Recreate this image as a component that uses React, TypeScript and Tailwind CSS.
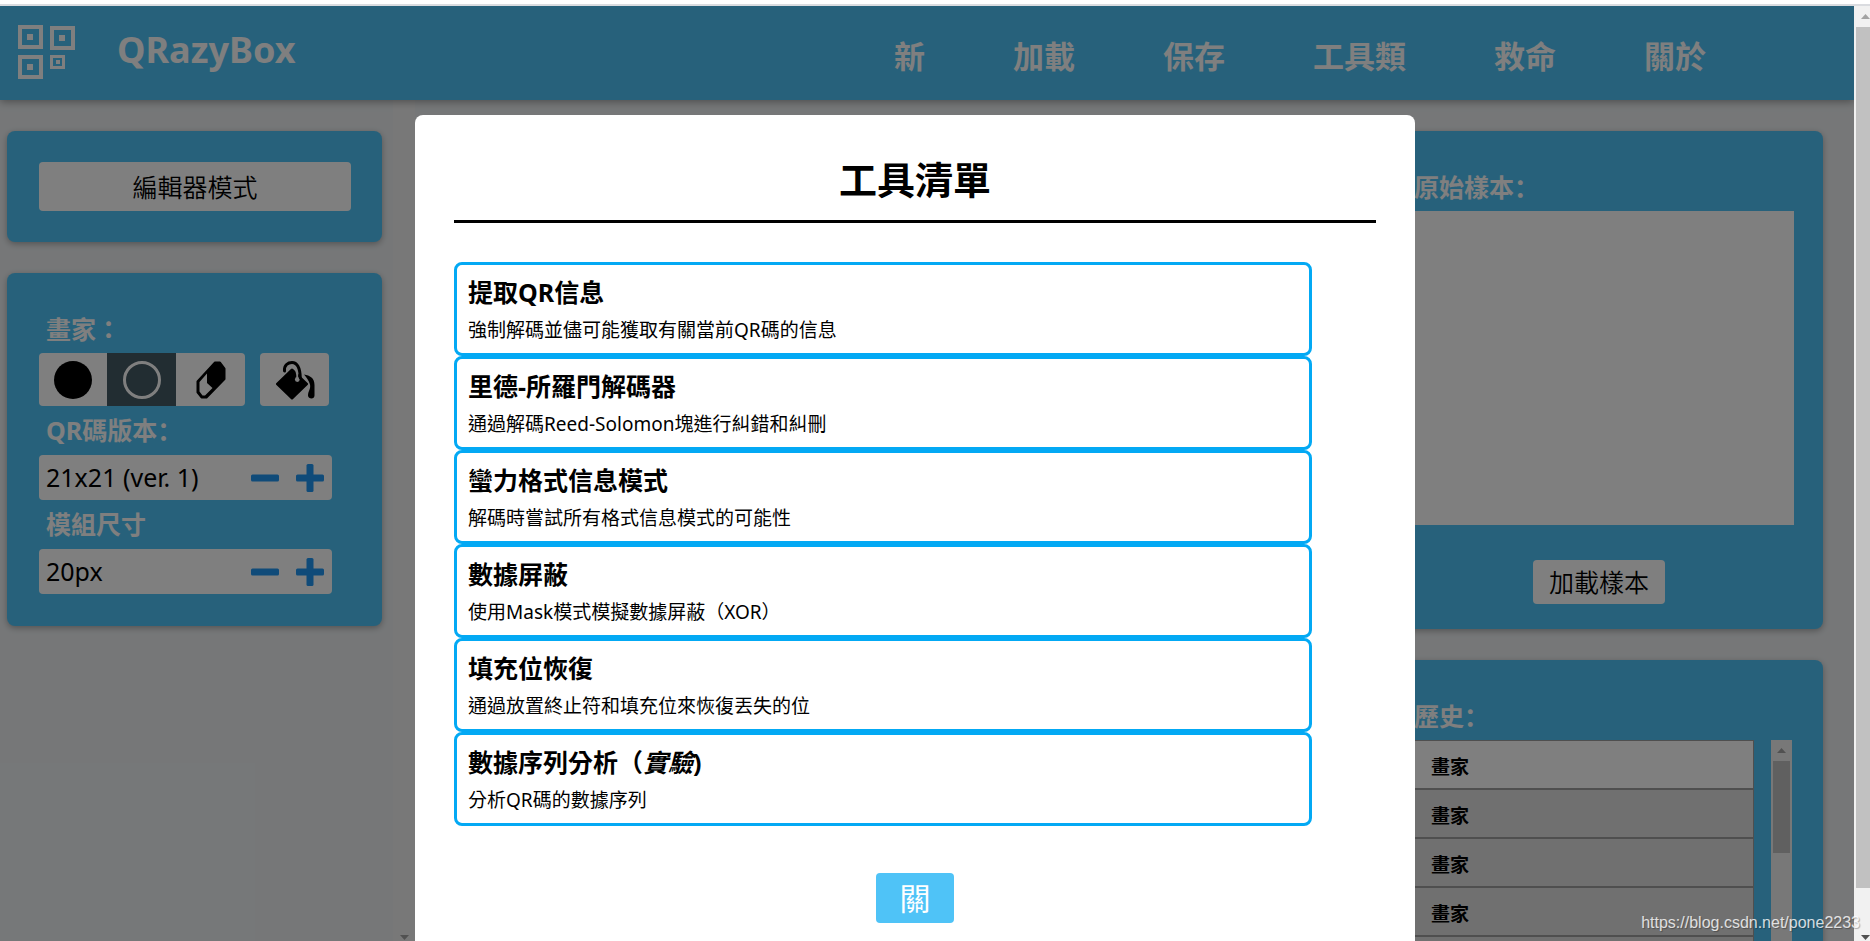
import React from 'react';

const navItems = ['新', '加載', '保存', '工具類', '救命', '關於'];

const historyItems = ['畫家', '畫家', '畫家', '畫家', '畫家'];

const tools = [
  { title: '提取QR信息', desc: '強制解碼並儘可能獲取有關當前QR碼的信息' },
  { title: '里德-所羅門解碼器', desc: '通過解碼Reed-Solomon塊進行糾錯和糾刪' },
  { title: '蠻力格式信息模式', desc: '解碼時嘗試所有格式信息模式的可能性' },
  { title: '數據屏蔽', desc: '使用Mask模式模擬數據屏蔽（XOR）' },
  { title: '填充位恢復', desc: '通過放置終止符和填充位來恢復丟失的位' },
  {
    title: (
      <>
        數據序列分析（<em>實驗</em>)
      </>
    ),
    desc: '分析QR碼的數據序列',
  },
];

const Logo = () => (
  <svg className="h-[54px] w-[57px]" viewBox="0 0 57 54" fill="none" stroke="white" strokeWidth="4">
    <rect x="2" y="2" width="21" height="20" />
    <rect x="34" y="3" width="21" height="20" />
    <rect x="2" y="32" width="21" height="20" />
    <rect x="33.5" y="31.5" width="12" height="11" strokeWidth="3" />
    <g fill="white" stroke="none">
      <rect x="9" y="9" width="6" height="6" />
      <rect x="41" y="10" width="6" height="6" />
      <rect x="9" y="39" width="6" height="6" />
      <rect x="38" y="35" width="4" height="4" />
    </g>
  </svg>
);

const EraserIcon = () => (
  <svg className="h-10 w-10" viewBox="0 0 40 40" strokeLinejoin="round">
    <path d="M24 2.5 H29 L33.5 8.5 V19 L15.5 37.5 H10.5 L6.5 32.5 V21.5 Z" fill="black" stroke="black" strokeWidth="2" />
    <path d="M16 13.5 V23 L21.5 28 L14 35.5 H11.5 L8.5 31.5 V22 Z" fill="white" />
  </svg>
);

const BucketIcon = () => (
  <svg className="h-10 w-10" viewBox="0 0 40 40" fill="none" strokeLinecap="round" strokeLinejoin="round">
    <path d="M17 10 L31.5 24 L17 38 L2.5 24 Z" fill="black" stroke="black" strokeWidth="3" />
    <path d="M18.5 6.5 C21.5 8.5 22.5 12 22.3 19" stroke="white" strokeWidth="2" />
    <circle cx="22.3" cy="19.5" r="2.4" fill="white" />
    <path d="M9.5 11 C9 5 13 2.5 17 2.5 C23 2.5 25 8 25.3 18" stroke="black" strokeWidth="3" />
    <path d="M29 14.5 C35 15.5 39.5 18 39.5 25 V35.5 C39.5 40 33 39 33 35.5 C33 31 36 29 35 24.5 C34 20.5 31.5 17.5 29 14.5 Z" fill="black" />
  </svg>
);

const MinusIcon = () => (
  <svg className="h-7 w-7" viewBox="0 0 28 28" fill="currentColor">
    <rect y="10.5" width="28" height="7" rx="1.5" />
  </svg>
);

const PlusIcon = () => (
  <svg className="h-7 w-7" viewBox="0 0 28 28" fill="currentColor">
    <rect y="10.5" width="28" height="7" rx="1.5" />
    <rect x="10.5" width="7" height="28" rx="1.5" />
  </svg>
);

const Arrow = ({ down, className }: { down?: boolean; className: string }) => (
  <svg className={`h-[5px] w-[9px] shrink-0 ${className}`} viewBox="0 0 9 5" fill="currentColor">
    <path d={down ? 'M0 0H9L4.5 5Z' : 'M0 5H9L4.5 0Z'} />
  </svg>
);

const Stepper = ({ id, label, value }: { id: string; label: string; value: string }) => (
  <div>
    <label htmlFor={id} className="block pl-[7px] font-['Noto_Sans','Noto_Sans_CJK_SC',sans-serif] text-[25px] leading-[49px] font-bold text-white">
      {label}
    </label>
    <div className="flex h-[45px] w-[293px] items-center rounded-[4px] bg-white">
      <input id={id} readOnly defaultValue={value} className="w-0 flex-1 pl-[7px] text-[25px] outline-none" />
      <button aria-label="減" className="flex w-[45px] justify-center text-[#2196f3]">
        <MinusIcon />
      </button>
      <button aria-label="加" className="flex w-[45px] justify-center text-[#2196f3]">
        <PlusIcon />
      </button>
    </div>
  </div>
);

const Header = () => (
  <header className="relative flex h-[94px] shrink-0 items-center bg-[#4fc3f7] pr-[148px] pb-0.5 pl-[18px] text-white shadow-[0_2px_8px_rgba(0,0,0,0.35)]">
    <Logo />
    <h1 className="ml-[42px] pb-1 text-[36px] leading-none font-bold">QRazyBox</h1>
    <nav className="ml-auto flex gap-[88px] pt-2">
      {navItems.map((item) => (
        <a key={item} href="#" className="text-[31px] leading-10 font-bold">
          {item}
        </a>
      ))}
    </nav>
  </header>
);

const LeftColumn = () => (
  <div className="w-[393px] shrink-0 pt-[31px] pr-[11px] pl-[7px]">
    <section className="rounded-lg bg-[#4fc3f7] px-8 py-[31px] shadow-[0_2px_6px_rgba(0,0,0,0.3)]">
      <button className="h-[49px] w-[312px] rounded-[4px] bg-white pt-0.5 text-[25px] font-[350]">編輯器模式</button>
    </section>
    <section className="mt-[31px] rounded-lg bg-[#4fc3f7] p-8 shadow-[0_2px_6px_rgba(0,0,0,0.3)]">
      <h2 className="pl-[7px] text-[25px] leading-[48px] font-bold text-white">畫家：</h2>
      <div className="flex h-[53px]">
        <button aria-label="黑色" className="flex w-[68px] items-center justify-center rounded-l-[4px] bg-white">
          <span className="size-[38px] rounded-full bg-black" />
        </button>
        <button aria-label="白色" className="flex w-[69px] items-center justify-center bg-[#455a64]">
          <span className="size-[38px] rounded-full border-[3px] border-white" />
        </button>
        <button aria-label="橡皮擦" className="flex w-[69px] items-center justify-center rounded-r-[4px] bg-white">
          <EraserIcon />
        </button>
        <button aria-label="填充" className="ml-[15px] flex w-[69px] items-center justify-center rounded-[4px] bg-white">
          <BucketIcon />
        </button>
      </div>
      <Stepper id="version" label="QR碼版本：" value="21x21 (ver. 1)" />
      <Stepper id="module-size" label="模組尺寸" value="20px" />
    </section>
  </div>
);

const RightColumn = () => (
  <div className="w-[479px] shrink-0 pt-[31px] pr-[31px]">
    <section className="rounded-lg bg-[#4fc3f7] px-8 pt-8 pb-[25px] shadow-[0_2px_6px_rgba(0,0,0,0.3)]">
      <h2 className="pl-[7px] font-['Noto_Sans','Noto_Sans_CJK_SC',sans-serif] text-[25px] leading-[48px] font-bold text-white">原始樣本：</h2>
      <div className="h-[314px] w-[387px] bg-white" />
      <button className="mx-auto mt-[35px] block h-[44px] rounded-[4px] bg-white px-4 text-[25px] leading-none font-[350]">加載樣本</button>
    </section>
    <section className="mt-[31px] rounded-lg bg-[#4fc3f7] py-8 pr-[31px] pl-8 shadow-[0_2px_6px_rgba(0,0,0,0.3)]">
      <h2 className="pl-[7px] font-['Noto_Sans','Noto_Sans_CJK_SC',sans-serif] text-[25px] leading-[48px] font-bold text-white">歷史：</h2>
      <div className="flex h-[340px] justify-between overflow-hidden">
        <table className="w-[347px] border-separate border-spacing-0 self-start">
          <tbody>
            {historyItems.map((item, i) => (
              <tr key={i} className={i === 0 ? 'bg-white' : 'bg-[#e0e0e0]'}>
                <td className="h-[49px] border border-[#9e9e9e] pt-1.5 pl-[23px] text-[19px] leading-none font-bold">{item}</td>
              </tr>
            ))}
          </tbody>
        </table>
        <div className="flex w-[21px] flex-col items-center bg-[#f1f1f1]">
          <Arrow className="my-2 text-[#a3a3a3]" />
          <div className="h-[92px] w-[17px] bg-[#c1c1c1]" />
        </div>
      </div>
    </section>
  </div>
);

const ToolsModal = () => (
  <div className="absolute inset-0 flex justify-center overflow-hidden bg-black/50 pt-[109px] pr-6">
    <div role="dialog" aria-label="工具清單" className="w-[1000px] rounded-t-lg bg-white px-[39px] pt-9">
      <h2 className="border-b-[3px] border-black pb-3 text-center text-[38px] leading-[57px] font-bold">工具清單</h2>
      <ul className="mt-[39px] mr-16">
        {tools.map((tool) => (
          <li key={tool.desc}>
            <button className="block w-full rounded-lg border-[3px] border-[#03a9f4] px-[11px] pt-[5px] pb-[7px] text-left">
              <span className="block text-[25px] leading-[44px] font-bold">{tool.title}</span>
              <span className="block text-[19px] leading-8">{tool.desc}</span>
            </button>
          </li>
        ))}
      </ul>
      <button className="mx-auto mt-[47px] block h-[50px] w-[78px] rounded-[4px] bg-[#4fc3f7] text-[31px] leading-none text-white">關</button>
    </div>
  </div>
);

export default function App() {
  return (
    <div className="relative flex h-screen flex-col overflow-hidden bg-white font-['Noto_Sans','Noto_Sans_CJK_TC',sans-serif] text-black">
      <div className="h-1.5 shrink-0 border-b-2 border-[#dadce0]" />
      <div className="flex min-h-0 flex-1">
        <div className="relative flex flex-1 flex-col overflow-hidden bg-[#eceff1]">
          <Header />
          <main className="flex min-h-0 flex-1">
            <LeftColumn />
            <div className="flex w-[22px] shrink-0 flex-col items-center justify-end bg-[#f1f1f1] pb-px">
              <Arrow down className="text-[#a3a3a3]" />
            </div>
            <div className="flex-1" />
            <RightColumn />
          </main>
          <ToolsModal />
        </div>
        {/* page scrollbar */}
        <div className="flex w-4 flex-col items-center bg-[#f1f1f1] pb-px pl-0.5">
          <Arrow className="my-2 ml-1 text-[#a3a3a3]" />
          <div className="h-[861px] w-full bg-[#c1c1c1]" />
          <Arrow down className="mt-auto ml-1 text-[#505050]" />
        </div>
      </div>
      <p className="absolute right-2.5 bottom-1.5 font-['Liberation_Sans',sans-serif] text-[16px] leading-6 text-white/80 [text-shadow:1px_1px_1px_rgba(0,0,0,0.3)]">
        https://blog.csdn.net/pone2233
      </p>
    </div>
  );
}
